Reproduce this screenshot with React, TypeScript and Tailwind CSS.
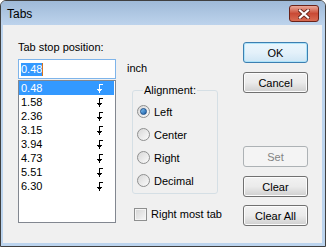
import React from 'react';

const stops = ['0.48', '1.58', '2.36', '3.15', '3.94', '4.73', '5.51', '6.30'];

// little "left tab" marker drawn in the list
const TabMark: React.FC<{ white?: boolean }> = ({ white }) => {
  const c = white ? '#ffffff' : '#000000';
  return (
    <svg width="7" height="9" viewBox="0 0 7 9" shapeRendering="crispEdges" className="shrink-0">
      <rect x="3" y="0" width="1" height="8" fill={c} />
      <rect x="3" y="0" width="4" height="1" fill={c} />
      <rect x="1" y="5" width="5" height="1" fill={c} />
      <rect x="2" y="6" width="3" height="1" fill={c} />
      <rect x="3" y="7" width="1" height="2" fill={c} />
    </svg>
  );
};

const Radio: React.FC<{ label: string; checked?: boolean }> = ({ label, checked }) => (
  <div className="h-[23px] flex items-center gap-[4px]">
    <span className="w-[13px] h-[13px] rounded-full border border-[#8e8f8f] bg-gradient-to-br from-[#d8d8d8] to-[#fbfbfb] flex items-center justify-center shrink-0">
      {checked && (
        <span className="w-[7px] h-[7px] rounded-full border border-[#1d4f8a] bg-gradient-to-br from-[#7fc4f5] to-[#1b5fa8]" />
      )}
    </span>
    <span className="leading-[14px]">{label}</span>
  </div>
);

const Btn: React.FC<{ label: string; def?: boolean; disabled?: boolean; className?: string }> = ({ label, def, disabled, className }) => (
  <button
    className={
      'w-[65px] h-[21px] rounded-[3px] border text-[11px] leading-[14px] flex items-center justify-center ' +
      (disabled
        ? 'border-[#adb2b5] bg-[#f4f4f4] text-[#838383] '
        : def
        ? 'border-[#3c7fb1] bg-gradient-to-b from-[#eaf6fd] via-[#e4f1fa] to-[#cfe6f5] text-black shadow-[inset_0_0_0_1px_#aee3f9] '
        : 'border-[#707070] bg-gradient-to-b from-[#f2f2f2] via-[#ebebeb] to-[#cfcfcf] text-black shadow-[inset_0_0_0_1px_#fcfcfc] ') +
      (className || '')
    }
  >
    {label}
  </button>
);

export default function App() {
  return (
    <div
      className="w-[326px] h-[247px] border border-[#404040] rounded-t-[6px] bg-[#bcd4ee] flex flex-col overflow-hidden text-[11px] text-black"
      style={{ fontFamily: '"Liberation Sans", Arial, sans-serif' }}
    >
      {/* title bar */}
      <div className="h-[24px] shrink-0 flex items-start justify-between bg-gradient-to-b from-[#9fbad8] to-[#bdd3ec]">
        <span className="pl-[6px] pt-[6px] text-[12px] leading-[14px]">Tabs</span>
        <div className="mt-[4px] mr-[6px] w-[30px] h-[17px] rounded-[3px] border border-[#6a2218] bg-gradient-to-b from-[#e9a99a] via-[#c94a35] to-[#d96b52] flex items-center justify-center">
          <svg width="12" height="10" viewBox="0 0 12 10">
            <path d="M2 1.5 L10 8.5 M10 1.5 L2 8.5" stroke="#6b2a20" strokeWidth="4" strokeLinecap="square" />
            <path d="M2 1.5 L10 8.5 M10 1.5 L2 8.5" stroke="#ffffff" strokeWidth="2.2" strokeLinecap="square" />
          </svg>
        </div>
      </div>

      {/* client area */}
      <div className="flex-1 ml-[2px] mr-[3px] mb-[3px] bg-[#f0f0f0] flex pl-[15px] pr-[14px]">
        {/* left column */}
        <div className="w-[98px] pt-[15px] flex flex-col">
          <div className="h-[14px] leading-[14px]">Tab stop position:</div>
          <div className="mt-[5px] h-[20px] border border-[#7eb4ea] bg-white flex items-center pl-[2px]">
            <span className="bg-[#3399ff] text-white leading-[13px]">0.48</span>
            <span className="w-[1px] h-[13px] bg-[#d7751c]" />
          </div>
          <div className="mt-[1px] h-[143px] border border-[#828790] bg-white">
            {stops.map((s, i) => (
              <div
                key={s}
                className={'h-[14px] flex items-center mr-[1px] ' + (i === 0 ? 'bg-[#3399ff] text-white' : '')}
              >
                <span className="w-[77px] pl-[2px] leading-[14px]">{s}</span>
                <TabMark white={i === 0} />
              </div>
            ))}
          </div>
        </div>

        {/* middle column */}
        <div className="ml-[11px] pt-[36px] flex flex-col">
          <div className="h-[14px] leading-[14px]">inch</div>
          <fieldset className="mt-[8px] ml-[5px] w-[86px] h-[111px] border border-[#d5dfe5] rounded-[3px] pl-[4px] pt-[3px]">
            <legend className="ml-[6px] px-[1px] leading-[14px]">Alignment:</legend>
            <Radio label="Left" checked />
            <Radio label="Center" />
            <Radio label="Right" />
            <Radio label="Decimal" />
          </fieldset>
          <div className="mt-[13px] ml-[7px] h-[14px] flex items-center gap-[4px]">
            <span className="w-[13px] h-[13px] border border-[#8e8f8f] bg-gradient-to-br from-[#d4d4d4] to-[#f7f7f7] shadow-[inset_0_0_0_1px_#f4f4f4] shrink-0" />
            <span className="leading-[14px]">Right most tab</span>
          </div>
        </div>

        {/* buttons */}
        <div className="ml-auto pt-[17px] flex flex-col">
          <Btn label="OK" def />
          <Btn label="Cancel" className="mt-[9px]" />
          <Btn label="Set" disabled className="mt-[53px]" />
          <Btn label="Clear" className="mt-[9px]" />
          <Btn label="Clear All" className="mt-[8px]" />
        </div>
      </div>
    </div>
  );
}
